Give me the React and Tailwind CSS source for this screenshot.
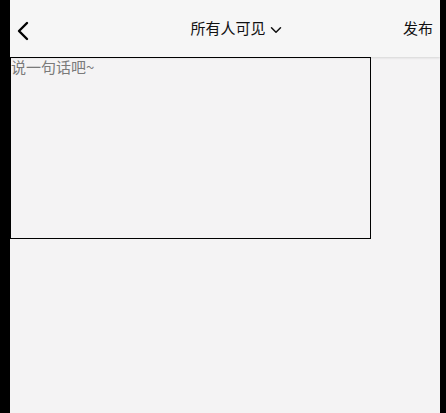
import { ChevronDown } from "lucide-react";

export default function App() {
  return (
    <div className="min-h-[413px] h-screen bg-black flex pl-[10px] pr-[6px]" style={{ fontFamily: '"Noto Sans CJK SC", "Noto Sans", sans-serif' }}>
      <div className="flex-1 bg-[#f4f3f4] flex flex-col">
        {/* 顶部导航 */}
        <header className="h-[57px] bg-[#f6f6f6] flex items-center justify-between shadow-[0_1px_2px_rgba(0,0,0,0.12)] relative z-10">
          <button className="w-[40px] h-full flex items-center">
            <svg width="40" height="57" viewBox="0 0 40 57" fill="none" stroke="black" strokeWidth="2.4" strokeLinecap="round" strokeLinejoin="round">
              <polyline points="17,23 9,31 17,39" />
            </svg>
          </button>
          <div className="flex items-center text-[15px] text-[#111] ml-[22px]">
            所有人可见
            <ChevronDown size={18} strokeWidth={2} className="ml-[1px] mt-[2px]" />
          </div>
          <button className="text-[15px] text-[#111] pr-[7px]">发布</button>
        </header>

        <textarea
          placeholder="说一句话吧~"
          className="w-[361px] h-[182px] border border-black bg-transparent text-[15px] leading-[17px] placeholder:text-[#7a7a7a] resize-none outline-none"
        />
      </div>
    </div>
  );
}
